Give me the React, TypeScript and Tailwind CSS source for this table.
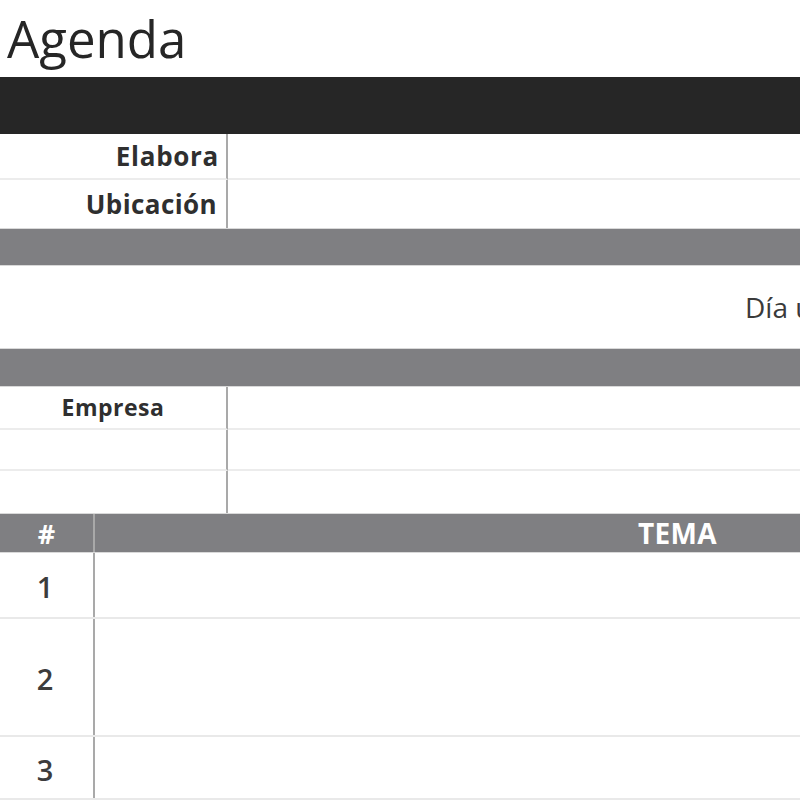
const font = { fontFamily: '"Open Sans", "Liberation Sans", sans-serif' };

function GrayBar({ h }: { h: string }) {
  return <div className={`${h} bg-[#7f7f82] border-y border-[#d9d9d9]`} />;
}

export default function App() {
  return (
    <div className="w-[800px] h-[800px] overflow-hidden bg-white text-[#333]" style={font}>
      {/* title */}
      <div className="h-[77px] pl-[7px] pt-[13px]">
        <h1 className="text-[51px] leading-none text-[#262626]">Agenda</h1>
      </div>

      <div className="h-[57px] bg-[#262626]" />

      {/* elabora / ubicación */}
      <div className="grid grid-cols-[228px_1fr]">
        <div className="h-[46px] flex items-center justify-end pr-[7px] border-r-2 border-b-2 border-r-[#a9a9a9] border-b-[#ececec]">
          <span className="text-[26px] font-bold tracking-[0.7px] text-[#2f2f2f]">Elabora</span>
        </div>
        <div className="h-[46px] border-b-2 border-[#ececec]" />
        <div className="h-[48px] flex items-center justify-end pr-[9px] border-r-2 border-[#a9a9a9]">
          <span className="text-[26px] font-bold tracking-[0.4px] text-[#2f2f2f]">Ubicación</span>
        </div>
        <div className="h-[48px]" />
      </div>

      <GrayBar h="h-[38px]" />

      <div className="h-[82px] pl-[745px] pt-[27px] whitespace-nowrap overflow-hidden">
        <span className="text-[28px] leading-none text-[#3a3a3a]">Día u</span>
      </div>

      <GrayBar h="h-[39px]" />

      {/* empresa */}
      <div className="grid grid-cols-[228px_1fr]">
        <div className="h-[43px] flex items-center justify-center border-r-2 border-b-2 border-r-[#a9a9a9] border-b-[#ececec]">
          <span className="text-[23px] font-bold tracking-[0.5px] text-[#2f2f2f]">Empresa</span>
        </div>
        <div className="h-[43px] border-b-2 border-[#ececec]" />
        <div className="h-[41px] border-r-2 border-b-2 border-r-[#a9a9a9] border-b-[#ececec]" />
        <div className="h-[41px] border-b-2 border-[#ececec]" />
        <div className="h-[42px] border-r-2 border-[#a9a9a9]" />
        <div className="h-[42px]" />
      </div>

      {/* tabla de temas */}
      <div className="grid grid-cols-[95px_1fr] bg-[#7f7f82] border-y border-[#d9d9d9]">
        <div className="h-[38px] flex items-center justify-center border-r-2 border-[#a9a9a9]">
          <span className="text-[27px] font-bold leading-none text-white">#</span>
        </div>
        <div className="h-[38px] flex items-center pl-[543px] whitespace-nowrap overflow-hidden">
          <span className="text-[28px] font-bold leading-none tracking-[0.3px] text-white">TEMA</span>
        </div>
      </div>

      {[
        { n: "1", h: "h-[64px]" },
        { n: "2", h: "h-[116px]" },
        { n: "3", h: "h-[61px]" },
      ].map((r) => (
        <div key={r.n} className="grid grid-cols-[95px_1fr] border-b-2 border-[#e9e9e9]">
          <div className={`${r.h} flex items-center justify-center border-r-2 border-[#a9a9a9] pr-[3px] pt-[3px]`}>
            <span className="text-[29px] font-semibold leading-none text-[#3c3c3c]">{r.n}</span>
          </div>
          <div className={r.h} />
        </div>
      ))}
    </div>
  );
}
